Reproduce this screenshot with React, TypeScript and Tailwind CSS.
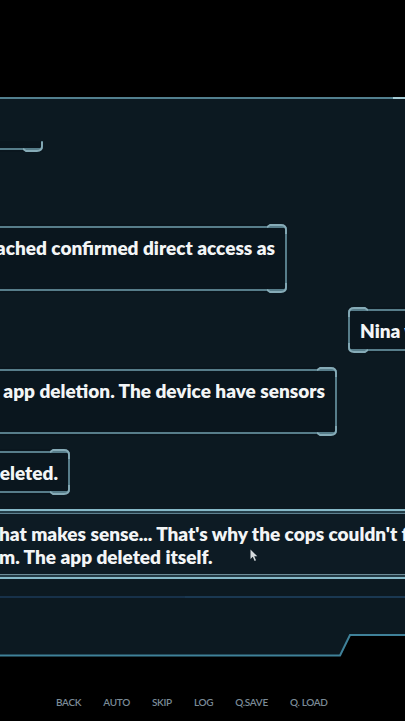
import React from "react";

function Corner({ className }: { className: string }) {
  return (
    <svg
      className={`absolute pointer-events-none ${className}`}
      width="20"
      height="10"
      viewBox="0 0 20 10"
      fill="none"
    >
      <path d="M0 3.2 L3 1 L14 1 Q19 1 19 6 L19 10" stroke="#86abb7" strokeWidth="1.8" />
    </svg>
  );
}

function Bubble({ lines }: { lines: string[] }) {
  return (
    <div className="relative shrink-0 bg-[#0a161e] px-[12px] py-[11.5px]">
      <div className="pointer-events-none absolute inset-x-0 inset-y-[2px] rounded-[3px] border-2 border-[#577d8a]" />
      <Corner className="top-0 right-0" />
      <Corner className="bottom-0 right-0 -scale-y-100" />
      <Corner className="top-0 left-0 -scale-x-100" />
      <Corner className="bottom-0 left-0 rotate-180" />
      {lines.map((l, i) => (
        <div
          key={i}
          className="relative whitespace-nowrap text-[19px] font-extrabold leading-[23px] text-[#f3f5f6]"
        >
          {l || "\u00a0"}
        </div>
      ))}
    </div>
  );
}

export default function App() {
  return (
    <div
      className="flex h-[721px] w-[405px] flex-col overflow-hidden bg-black"
      style={{ fontFamily: "Lato, 'Open Sans', sans-serif" }}
    >
      <div className="h-[97px] shrink-0" />
      {/* top border of panel */}
      <div className="flex h-[2px] shrink-0 justify-end bg-[#527f8e]">
        <div className="w-[12px] bg-[#a6ccd6]" />
      </div>
      {/* panel */}
      <div className="flex h-[535px] shrink-0 flex-col bg-[#0c1921]">
        {/* chat area */}
        <div className="mt-[42px] flex h-[368px] shrink-0 flex-col overflow-hidden">
          <div className="mt-[-81px] flex w-[43px] shrink-0 justify-end">
            <div className="w-[120px] shrink-0">
              <Bubble lines={["", "", ""]} />
            </div>
          </div>
          <div className="mt-[72px] flex w-[287px] shrink-0 justify-end">
            <Bubble lines={["The server logs I breached confirmed direct access as", "root."]} />
          </div>
          <div className="mt-[14px] flex shrink-0 pl-[348px]">
            <Bubble lines={["Nina       was the one who told me."]} />
          </div>
          <div className="mt-[14px] flex w-[337px] shrink-0 justify-end">
            <Bubble lines={["It was set to trigger the app deletion. The device have sensors", "for that."]} />
          </div>
          <div className="mt-[13px] flex w-[70px] shrink-0 justify-end">
            <Bubble lines={["Yeah, it got deleted."]} />
          </div>
        </div>

        {/* dialogue box */}
        <div className="flex shrink-0 flex-col">
          <div className="h-[2px] bg-[#86b9c8]" />
          <div className="h-[2px] bg-[#233d48]" />
          <div className="h-[1px] bg-[#5f8190]" />
          <div className="relative h-[60px] bg-[#0d1b24] pt-[8px]">
            <div className="ml-[-1px] whitespace-nowrap text-[19px] font-extrabold leading-[23px] text-[#f3f5f6]">
              hat makes sense... That's why the cops couldn't find it on
            </div>
            <div className="ml-[-1px] whitespace-nowrap text-[19px] font-extrabold leading-[23px] text-[#f3f5f6]">
              m. The app deleted itself.
            </div>
            <svg
              className="absolute left-[250px] top-[35px]"
              width="8"
              height="13"
              viewBox="0 0 8 13"
            >
              <path d="M0.5 0.5 L0.5 10 L2.8 7.8 L4.6 12 L6 11.3 L4.2 7.2 L7.3 7.2 Z" fill="#d5dadd" />
            </svg>
          </div>
          <div className="h-[1px] bg-[#6d8c98]" />
          <div className="h-[2px] bg-[#223a45]" />
          <div className="h-[2px] bg-[#86b9c8]" />
        </div>

        <div className="mt-[17px] flex h-[2px] shrink-0">
          <div className="w-[185px] bg-[#17314a]" />
          <div className="flex-1 bg-[#1a3852]" />
        </div>
      </div>

      {/* bottom edge of panel */}
      <svg className="block shrink-0" width="405" height="23" viewBox="0 0 405 23">
        <path d="M0 0 L351 0 L341 22 L0 22 Z" fill="#0c1921" />
        <path d="M0 21.5 L340 21.5 L350 1 L405 1" stroke="#3f8199" strokeWidth="2" fill="none" />
      </svg>

      {/* menu */}
      <div className="flex shrink-0 gap-[22px] pl-[56px] pt-[38px] text-[10px] font-semibold leading-[14px] tracking-[-0.3px] text-[#7b8b97]">
        <span>BACK</span>
        <span>AUTO</span>
        <span>SKIP</span>
        <span>LOG</span>
        <span>Q.SAVE</span>
        <span>Q. LOAD</span>
      </div>
    </div>
  );
}
